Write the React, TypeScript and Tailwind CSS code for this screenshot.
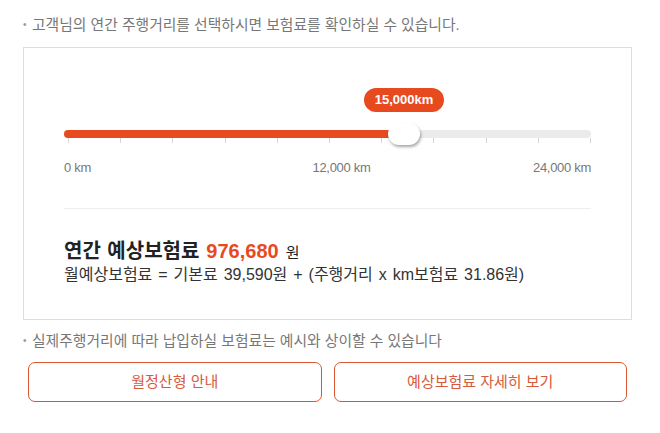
import React from 'react';

const font = { fontFamily: '"Liberation Sans", "Noto Sans CJK KR", sans-serif' };

const Note: React.FC<{ text: string }> = ({ text }) => (
  <p className="flex items-center text-[14.8px] leading-[20px] text-[#777]">
    <span className="w-[9px] text-[10px] text-[#999]">•</span>
    <span>{text}</span>
  </p>
);

const App: React.FC = () => {
  const ticks = Array.from({ length: 11 });

  return (
    <div className="w-[660px] h-[433px] bg-white" style={font}>
      <div className="pt-[15px] pl-[23px] w-[632px]">
        <Note text="고객님의 연간 주행거리를 선택하시면 보험료를 확인하실 수 있습니다." />

        {/* 슬라이더 박스 */}
        <div className="mt-[12px] border border-[#dddddd] px-[40px] pt-[40px] pb-[34px]">
          <div className="relative h-[58px]">
            <div className="absolute left-[300px] top-0 h-[24px] w-[80px] rounded-full bg-[#e84a1f] text-white text-[13px] font-bold flex items-center justify-center">
              15,000km
            </div>
            <div className="absolute left-0 right-0 top-[42px] h-[8px] rounded-full bg-[#ebebeb]">
              <div className="h-full w-[336px] rounded-full bg-[#e84a1f]" />
            </div>
            <div className="absolute left-[4px] right-0 top-[50px] flex justify-between">
              {ticks.map((_, i) => (
                <span key={i} className="w-px h-[5px] bg-[#d5d5d5]" />
              ))}
            </div>
            <div className="absolute left-[324px] top-[35px] h-[22px] w-[32px] rounded-full bg-white shadow-[1px_2px_3px_rgba(0,0,0,0.35)]" />
          </div>
          <div className="mt-[13px] grid grid-cols-3 text-[13px] leading-[18px] text-[#777] tracking-[-0.3px]">
            <span>0 km</span>
            <span className="text-center pl-[28px]">12,000 km</span>
            <span className="text-right">24,000 km</span>
          </div>
          <div className="mt-[31px] h-px bg-[#eeeeee]" />
          <div className="mt-[30px]">
            <p className="flex items-baseline text-[#222] leading-[24px]">
              <span className="text-[20px] font-bold [word-spacing:1px]">연간 예상보험료</span>
              <span className="ml-[7px] text-[20px] font-bold text-[#e84a1f]">976,680</span>
              <span className="ml-[7px] text-[15px]">원</span>
            </p>
            <p className="text-[16px] leading-[20px] text-[#333] [word-spacing:1.5px]">
              월예상보험료 = 기본료 39,590원 + (주행거리 x km보험료 31.86원)
            </p>
          </div>
        </div>

        <div className="mt-[11px]">
          <Note text="실제주행거리에 따라 납입하실 보험료는 예시와 상이할 수 있습니다" />
        </div>

        <div className="mt-[11px] mx-[5px] grid grid-cols-2 gap-[12px]">
          <button className="h-[40px] rounded-[7px] border border-[#d9572f] text-[15px] text-[#d65a3c] bg-white">
            월정산형 안내
          </button>
          <button className="h-[40px] rounded-[7px] border border-[#d9572f] text-[15px] text-[#d65a3c] bg-white">
            예상보험료 자세히 보기
          </button>
        </div>
      </div>
    </div>
  );
};

export default App;
